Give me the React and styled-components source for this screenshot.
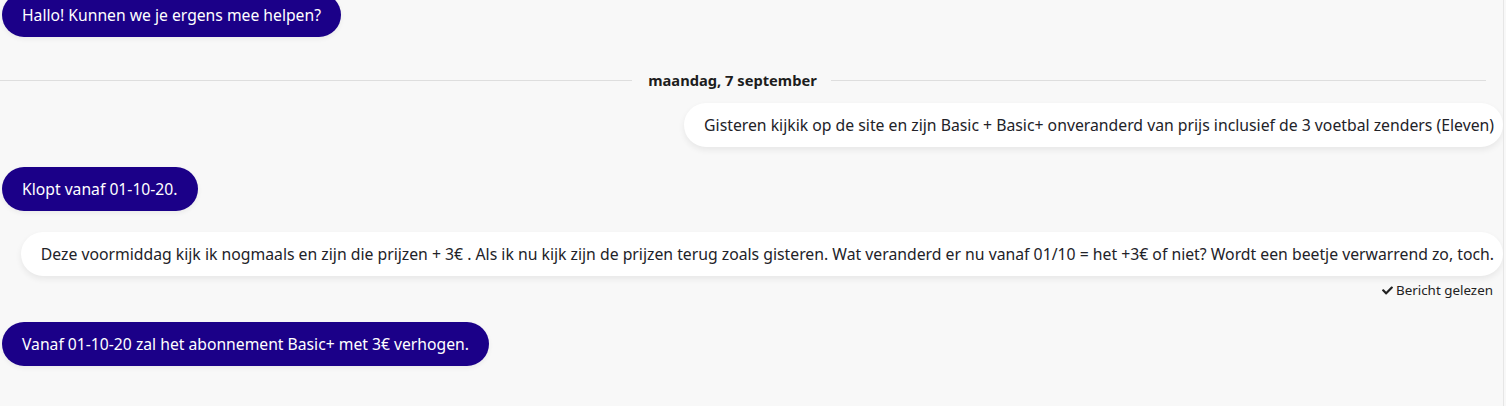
import React from "react";
import styled, { createGlobalStyle } from "styled-components";
import { FaCheck } from "react-icons/fa";

const GlobalStyle = createGlobalStyle`
  html, body {
    margin: 0;
    padding: 0;
    background: #f8f8f8;
    font-family: "Noto Sans", "Open Sans", sans-serif;
    overflow: hidden;
  }
`;

const Page = styled.div`
  width: 1503px;
  height: 406px;
  border-right: 1px solid #e6e6e6;
  overflow: hidden;
`;

const Thread = styled.div`
  display: flex;
  flex-direction: column;
  margin-top: -7px;
`;

const Row = styled.div`
  display: flex;
  justify-content: ${({ $mine }) => ($mine ? "flex-end" : "flex-start")};
  margin-top: ${({ $gap }) => $gap || 0}px;
  padding-left: ${({ $mine }) => ($mine ? 0 : 2)}px;
`;

const Bubble = styled.div`
  box-sizing: border-box;
  height: 44px;
  display: flex;
  align-items: center;
  border-radius: 22px;
  line-height: 20px;
  white-space: nowrap;
  ${({ $mine }) =>
    $mine
      ? `
    background: #ffffff;
    color: #222228;
    font-size: 15.78px;
    padding: 0 9px 0 20px;
    box-shadow: 0 3px 6px rgba(0, 0, 0, 0.07);
  `
      : `
    background: #1b0088;
    color: #ffffff;
    font-size: 15.7px;
    padding: 0 20px;
    box-shadow: 0 2px 5px rgba(0, 0, 0, 0.06);
  `}
`;

const Divider = styled.div`
  display: flex;
  align-items: center;
  margin-top: 33px;
  height: 20px;
  padding-right: 17px;
  &::before,
  &::after {
    content: "";
    height: 1px;
    background: #dedede;
  }
  &::before {
    flex: 632;
    margin-right: 16px;
  }
  &::after {
    flex: 655;
    margin-left: 14px;
  }
`;

const DayLabel = styled.span`
  font-size: 14.7px;
  font-weight: 700;
  color: #1d1d1d;
`;

const Receipt = styled.div`
  display: flex;
  justify-content: flex-end;
  align-items: center;
  gap: 3px;
  margin-top: 5px;
  padding-right: 10px;
  font-size: 13.4px;
  line-height: 18px;
  color: #222;
  svg {
    width: 11px;
    height: 11px;
  }
`;

export default function App() {
  return (
    <Page>
      <GlobalStyle />
      <Thread>
        <Row>
          <Bubble>Hallo! Kunnen we je ergens mee helpen?</Bubble>
        </Row>
        <Divider>
          <DayLabel>maandag, 7 september</DayLabel>
        </Divider>
        <Row $mine $gap={13}>
          <Bubble $mine>
            Gisteren kijkik op de site en zijn Basic + Basic+ onveranderd van
            prijs inclusief de 3 voetbal zenders (Eleven)
          </Bubble>
        </Row>
        <Row $gap={20}>
          <Bubble>Klopt vanaf 01-10-20.</Bubble>
        </Row>
        <Row $mine $gap={21}>
          <Bubble $mine>
            Deze voormiddag kijk ik nogmaals en zijn die prijzen + 3€ . Als ik
            nu kijk zijn de prijzen terug zoals gisteren. Wat veranderd er nu
            vanaf 01/10 = het +3€ of niet? Wordt een beetje verwarrend zo, toch.
          </Bubble>
        </Row>
        <Receipt>
          <FaCheck />
          Bericht gelezen
        </Receipt>
        <Row $gap={23}>
          <Bubble>Vanaf 01-10-20 zal het abonnement Basic+ met 3€ verhogen.</Bubble>
        </Row>
      </Thread>
    </Page>
  );
}
